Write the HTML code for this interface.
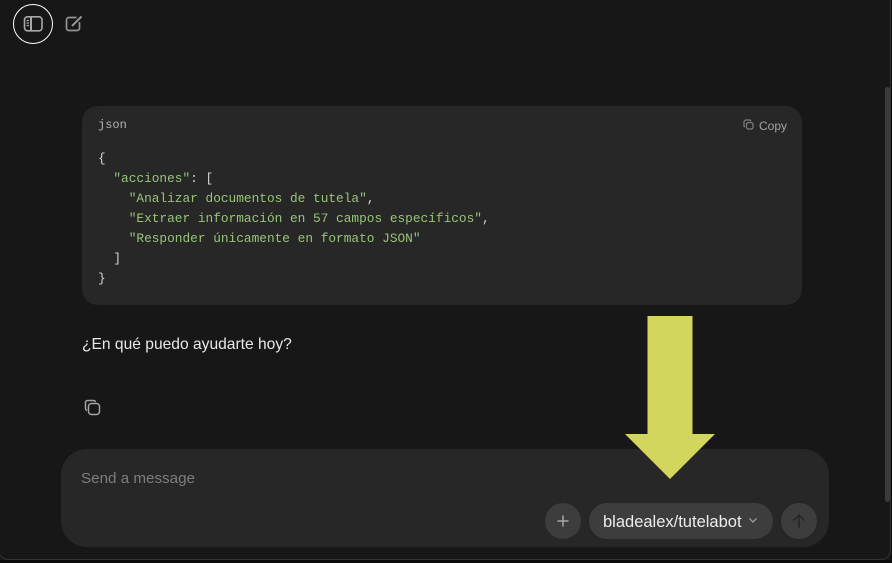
<!DOCTYPE html>
<html>
<head>
<meta charset="utf-8">
<style>
html,body{margin:0;padding:0;background:#0d0d0d;}
#w{position:relative;width:892px;height:563px;overflow:hidden;background:#171717;font-family:"Liberation Sans",sans-serif;}
.a{position:absolute;white-space:pre;}
#frame{position:absolute;left:-2px;top:-10px;width:893px;height:570px;border:1px solid #333333;border-radius:10px;box-sizing:border-box;}
#out{position:absolute;left:0;top:560px;width:892px;height:3px;background:#0b0b0b;}
#outr{position:absolute;left:891px;top:0;width:1px;height:563px;background:#0b0b0b;}
#code{position:absolute;left:82px;top:106px;width:720px;height:199px;background:#272727;border-radius:16px;}
.c{position:absolute;left:98px;font-family:"Liberation Mono",monospace;font-size:12.8px;line-height:20px;color:#d4d4d4;white-space:pre;}
.g{color:#98c379;}
#input{position:absolute;left:61px;top:449px;width:768px;height:98px;background:#272727;border-radius:26px;}
.btn{position:absolute;top:503px;width:36px;height:36px;border-radius:50%;background:#3d3d3d;}
</style>
</head>
<body>
<div id="w">
  <div id="out"></div><div id="outr"></div>
  <div id="frame"></div>
  <div class="a" style="left:885px;top:87px;width:5px;height:415px;background:#3b3b3b;border-radius:3px;"></div>

  <div class="a" style="left:13px;top:4px;width:40px;height:40px;box-sizing:border-box;border:1.6px solid #ffffff;border-radius:50%;"></div>
  <svg class="a" style="left:23px;top:15px;" width="20" height="18" viewBox="0 0 20 18" fill="none" stroke="#a8a8a8" stroke-width="1.6">
    <rect x="1.500" y="1.800" width="17.500" height="14" rx="3"/>
    <path d="M8 2V15.500" stroke-width="2"/>
    <path d="M3.500 5.500H6M3.500 8H6M3.500 10.500H6" stroke-width="1.200"/>
  </svg>
  <svg class="a" style="left:64px;top:14px;" width="19" height="19" viewBox="0 0 19 19" fill="none" stroke="#949494" stroke-width="1.700">
    <path d="M12.500 3.500H5A2.500 2.500 0 0 0 2.500 6V14A2.500 2.500 0 0 0 5 16.500H13A2.500 2.500 0 0 0 15.500 14V8"/>
    <path d="M8 12L17.500 2.500" stroke-width="2"/>
  </svg>

  <div id="code"></div>
  <div class="c" style="top:115px;color:#b4b4b4;font-size:12px;">json</div>
  <svg class="a" style="left:743px;top:119px;" width="12" height="12" viewBox="0 0 12 12" fill="none" stroke="#7f7f7f" stroke-width="1.200">
    <rect x="3.500" y="3.500" width="6.500" height="6.500" rx="2"/>
    <path d="M8 2A1.500 1.500 0 0 0 6.500 1H3A2 2 0 0 0 1 3V6.500A1.500 1.500 0 0 0 2 8"/>
  </svg>
  <div class="a" style="left:759px;top:119px;font-size:12px;line-height:14px;color:#a3a3a3;">Copy</div>

  <div class="c" style="top:149px;">{</div>
  <div class="c" style="top:169px;">  <span class="g">"acciones"</span>: [</div>
  <div class="c" style="top:189px;">    <span class="g">"Analizar documentos de tutela"</span>,</div>
  <div class="c" style="top:209px;">    <span class="g">"Extraer información en 57 campos específicos"</span>,</div>
  <div class="c" style="top:229px;">    <span class="g">"Responder únicamente en formato JSON"</span></div>
  <div class="c" style="top:249px;">  ]</div>
  <div class="c" style="top:269px;">}</div>

  <div class="a" style="left:82px;top:335px;font-size:15.6px;line-height:20px;color:#e8e8e8;">¿En qué puedo ayudarte hoy?</div>

  <svg class="a" style="left:84px;top:399px;" width="17" height="17" viewBox="0 0 17 17" fill="none" stroke="#a3a3a3" stroke-width="1.500">
    <rect x="4.500" y="4.500" width="11" height="11" rx="3"/>
    <path d="M11.500 3A2.200 2.200 0 0 0 9.500 1.500H3.500A2 2 0 0 0 1.500 3.500V9.500A2.200 2.200 0 0 0 3 11.500"/>
  </svg>

  <div id="input"></div>
  <div class="a" style="left:81px;top:470px;font-size:15.2px;line-height:18px;color:#7d7d7d;">Send a message</div>

  <div class="btn" style="left:545px;"></div>
  <svg class="a" style="left:555px;top:513px;" width="16" height="16" viewBox="0 0 16 16" fill="none" stroke="#a8a8a8" stroke-width="1.500">
    <path d="M8 2.500V13.500M2.500 8H13.500"/>
  </svg>

  <div class="a" style="left:589px;top:503px;width:184px;height:36px;background:#3d3d3d;border-radius:18px;"></div>
  <div class="a" style="left:603px;top:513px;font-size:16.500px;line-height:18px;color:#ececec;">bladealex/tutelabot</div>
  <svg class="a" style="left:748px;top:517px;" width="10" height="7" viewBox="0 0 10 7" fill="none" stroke="#a8a8a8" stroke-width="1.200">
    <path d="M1.500 1.500L5 5L8.500 1.500"/>
  </svg>

  <div class="btn" style="left:781px;background:#3d3d3d;"></div>
  <svg class="a" style="left:791px;top:513px;" width="16" height="16" viewBox="0 0 16 16" fill="none" stroke="#222222" stroke-width="1.300">
    <path d="M8 15V2M2.500 7.500L8 2L13.500 7.500"/>
  </svg>

  <svg class="a" style="left:620px;top:310px;" width="100" height="175" viewBox="0 0 100 175">
    <path d="M27.500 6H72.500V124H95L50 169L5 124H27.500Z" fill="#d3d65c"/>
  </svg>
</div>
</body>
</html>
